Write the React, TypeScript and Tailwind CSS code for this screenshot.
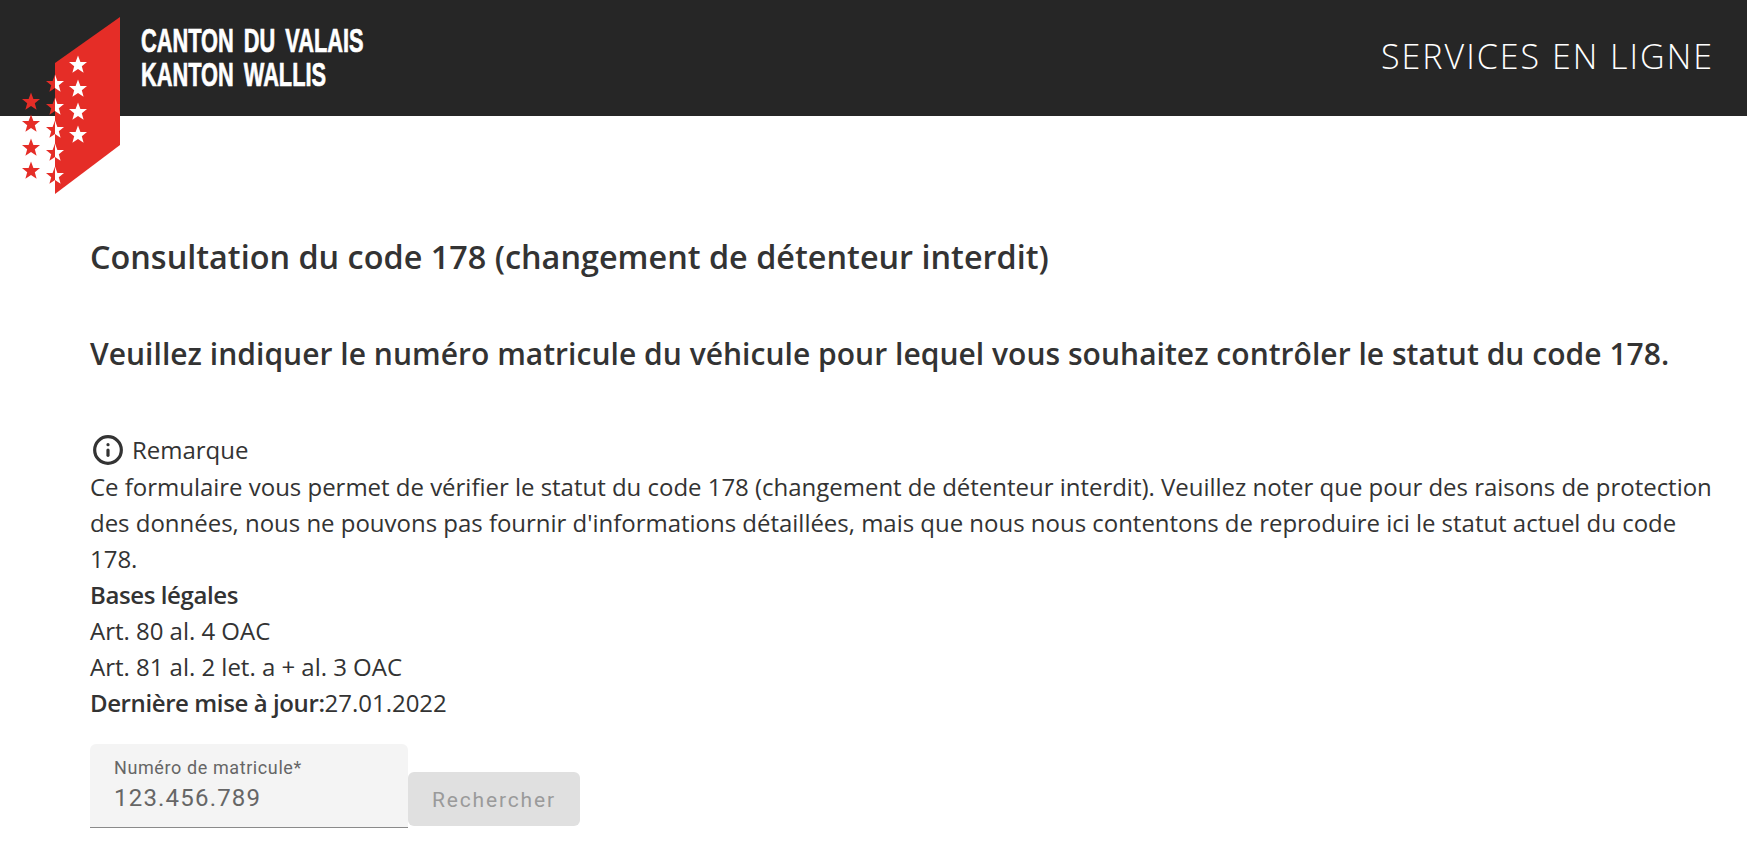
import React from "react";
import { Info } from "lucide-react";

const STAR = "M0,-9.5 L2.4,-3.1 L9,-2.9 L3.8,1.2 L5.6,7.7 L0,4 L-5.6,7.7 L-3.8,1.2 L-9,-2.9 L-2.4,-3.1 Z";

const Logo = () => (
  <svg width="130" height="200" viewBox="0 0 130 200" className="absolute left-0 top-0">
    <defs>
      <clipPath id="left-half">
        <rect x="0" y="0" width="55" height="200" />
      </clipPath>
      <clipPath id="right-half">
        <rect x="55" y="0" width="75" height="200" />
      </clipPath>
    </defs>
    <polygon points="55,63 120,17 120,145 55,194" fill="#e52d27" />
    {[65, 89, 112, 135].map((y) => (
      <path key={y} d={STAR} transform={`translate(78 ${y})`} fill="#fff" />
    ))}
    {[102, 124, 148, 171].map((y) => (
      <path key={y} d={STAR} transform={`translate(31 ${y})`} fill="#e52d27" />
    ))}
    {[84, 107, 130, 153, 176].map((y) => (
      <g key={y}>
        <g clipPath="url(#left-half)">
          <path d={STAR} transform={`translate(55 ${y})`} fill="#e52d27" />
        </g>
        <g clipPath="url(#right-half)">
          <path d={STAR} transform={`translate(55 ${y})`} fill="#fff" />
        </g>
      </g>
    ))}
  </svg>
);

export default function App() {
  return (
    <div className="relative h-[842px] overflow-hidden bg-white font-['Open_Sans',sans-serif] text-[#333333]">
      <header className="flex h-[116px] items-center justify-between bg-[#262626] pl-[141px] pr-[33px]">
        <div className="origin-left scale-x-[0.66] font-['Liberation_Sans',sans-serif] text-[33px] font-bold leading-[34px] text-white [word-spacing:6px] [-webkit-text-stroke:0.7px_white]">
          <div>CANTON DU VALAIS</div>
          <div>KANTON WALLIS</div>
        </div>
        <div className="pb-[4px] text-[34px] font-light tracking-[2px] text-white">SERVICES EN LIGNE</div>
      </header>
      <Logo />
      <main className="pl-[90px] pr-[26px]">
        <h1 className="mt-[118px] text-[32.4px] font-semibold leading-[44px]">
          Consultation du code 178 (changement de détenteur interdit)
        </h1>
        <h2 className="mt-[56px] text-[30px] font-semibold leading-[40px] tracking-[0.03px]">
          Veuillez indiquer le numéro matricule du véhicule pour lequel vous souhaitez contrôler le statut du code 178.
        </h2>
        <div className="mt-[56px] text-[24px] leading-[36px] tracking-[-0.02px]">
          <div className="flex h-[39px] items-center gap-[8px] pl-[2px]">
            <Info className="h-[32px] w-[32px]" strokeWidth={2.4} />
            <span>Remarque</span>
          </div>
          <p>
            Ce formulaire vous permet de vérifier le statut du code 178 (changement de détenteur interdit). Veuillez
            noter que pour des raisons de protection des données, nous ne pouvons pas fournir d'informations détaillées,
            mais que nous nous contentons de reproduire ici le statut actuel du code 178.
          </p>
          <div className="font-semibold tracking-[-0.4px]">Bases légales</div>
          <div>Art. 80 al. 4 OAC</div>
          <div>Art. 81 al. 2 let. a + al. 3 OAC</div>
          <div>
            <span className="font-semibold tracking-[-0.4px]">Dernière mise à jour:</span>27.01.2022
          </div>
        </div>
        <div className="mt-[23px] flex items-end font-['Roboto',sans-serif]">
          <div className="h-[84px] w-[318px] rounded-t-[6px] border-b border-[#8a8a8a] bg-[#f4f4f4] px-[24px] pt-[12px]">
            <div className="text-[18px] leading-[24px] tracking-[0.6px] text-[#666666]">Numéro de matricule*</div>
            <div className="mt-[2px] text-[24px] leading-[32px] tracking-[1.2px] text-[#666666]">123.456.789</div>
          </div>
          <button className="mb-[2px] h-[54px] w-[172px] rounded-[6px] bg-[#e0e0e0] pt-[4px] text-[21px] tracking-[1.85px] text-[#9a9a9a]">
            Rechercher
          </button>
        </div>
      </main>
    </div>
  );
}
